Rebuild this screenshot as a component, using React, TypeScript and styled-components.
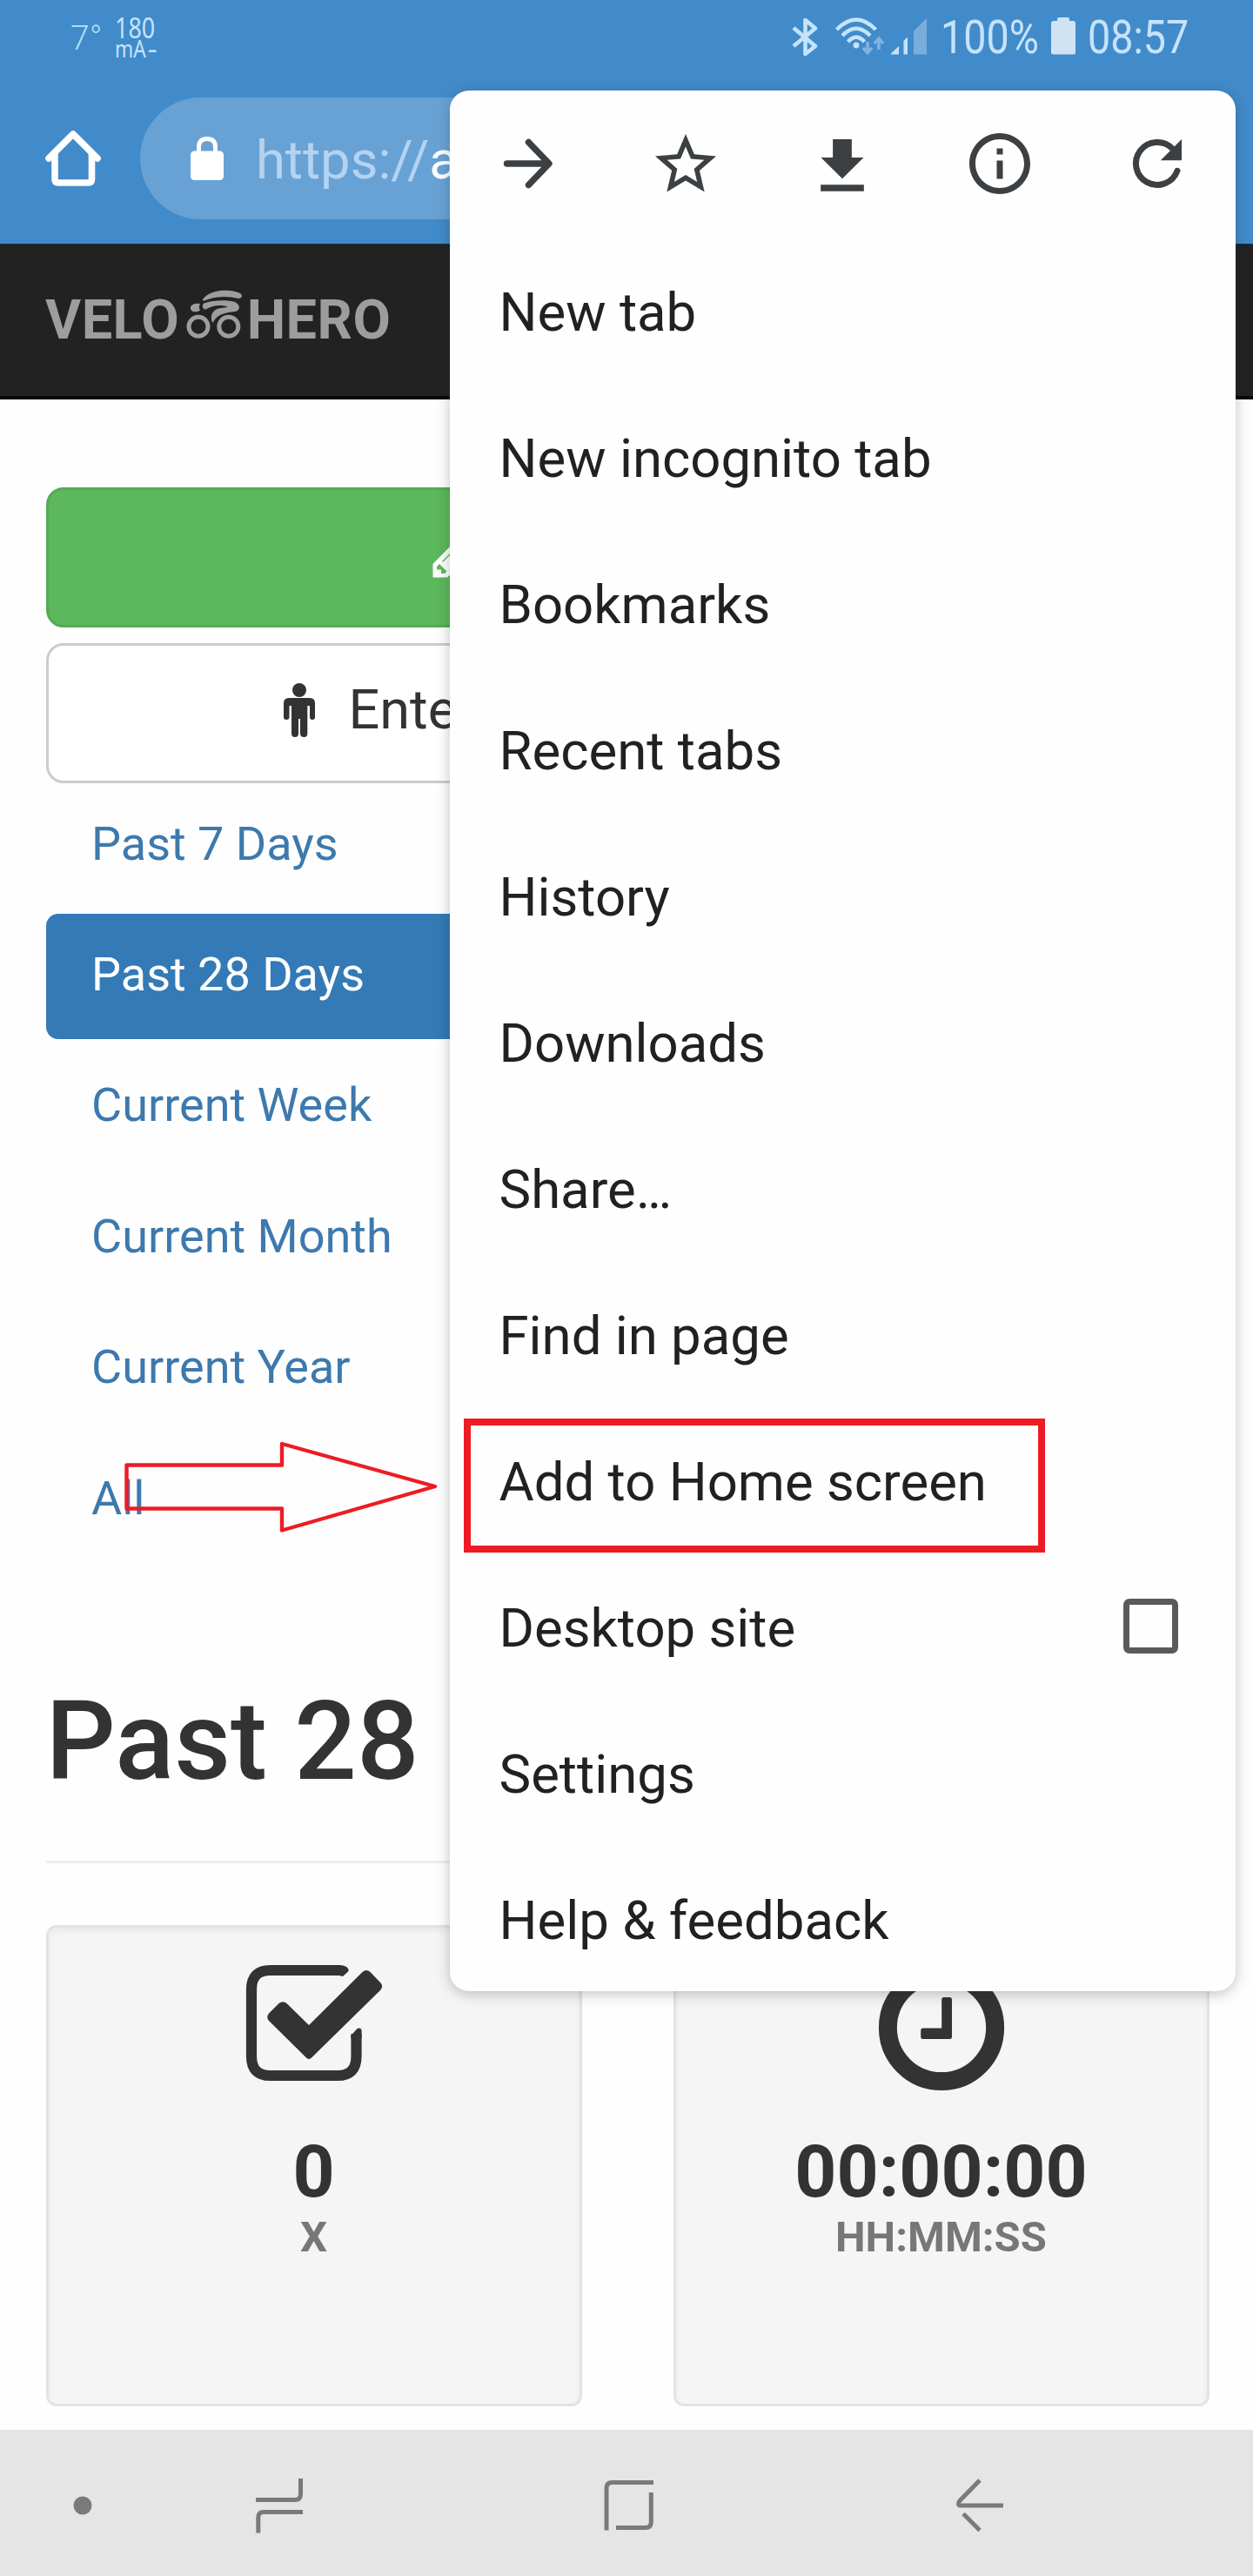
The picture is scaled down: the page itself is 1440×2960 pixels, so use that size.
import React from "react";
import styled, { createGlobalStyle } from "styled-components";

const GlobalStyle = createGlobalStyle`
  * { box-sizing: border-box; }
  body { margin: 0; background: #fefefe; font-family: Roboto, "Liberation Sans", sans-serif; }
  svg { display: block; flex: none; }
`;

const Phone = styled.div`
  position: relative;
  display: flex;
  flex-direction: column;
  width: 1440px;
  height: 2960px;
  overflow: hidden;
  background: #fefefe;
`;

/* ---------- status bar ---------- */
const StatusBar = styled.header`
  display: flex;
  justify-content: space-between;
  height: 84px;
  padding: 0 75px 0 81px;
  background: #428bca;
  color: #c5e3fb;
`;
const StatusGroup = styled.div`
  display: flex;
  align-items: flex-start;
`;
const Temperature = styled.span`
  width: 51px;
  margin-top: 20px;
  font-size: 39px;
  line-height: 48px;
  font-weight: 300;
  color: #b5daf8;
`;
const Current = styled.div`
  display: flex;
  flex-direction: column;
  margin-top: 17px;
  font-family: "Noto Sans", sans-serif;
  transform: scaleX(0.84);
  transform-origin: left;
`;
const CurrentLine = styled.span<{ $size: number }>`
  font-size: ${(p) => p.$size}px;
  line-height: ${(p) => (p.$size > 30 ? 29 : 20)}px;
`;
const Dash = styled.span`
  display: inline-block;
  margin-left: 2px;
  font-weight: 500;
  transform: scaleX(1.5);
  transform-origin: left;
`;
const StatusText = styled.span<{ $width: number }>`
  width: ${(p) => p.$width}px;
  margin-top: 13px;
  font-size: 53px;
  line-height: 60px;
  white-space: nowrap;
  transform: scaleX(0.88);
  transform-origin: left;
`;

/* ---------- browser toolbar ---------- */
const Toolbar = styled.div`
  display: flex;
  align-items: center;
  height: 197px;
  padding: 0 0 1px 48px;
  background: #428bca;
  border-bottom: 1px solid #12304a;
`;
const AddressBar = styled.div`
  display: flex;
  align-items: center;
  width: 1100px;
  height: 140px;
  margin-left: 41px;
  padding-left: 54px;
  border-radius: 70px;
  background: #68a2d5;
`;
const Url = styled.span`
  margin-left: 33px;
  padding-top: 4px;
  font-size: 61.5px;
  color: #b4d3f1;
`;
const Host = styled.span`
  color: #fff;
`;

/* ---------- site ---------- */
const SiteHeader = styled.div`
  display: flex;
  align-items: center;
  height: 178px;
  padding: 0 0 2px 52px;
  background: #222;
  border-bottom: 4px solid #080808;
`;
const Brand = styled.div`
  display: flex;
  align-items: center;
  font-size: 63px;
  font-weight: 700;
  letter-spacing: 0.5px;
  color: #9d9d9d;
  svg { margin: -10px 5px 0 6.5px; }
`;
const Page = styled.main`
  display: flex;
  flex-direction: column;
  flex: 1;
  padding: 101px 50.5px 0 52.5px;
`;
const Button = styled.div<{ $green?: boolean }>`
  display: flex;
  align-items: center;
  height: 161px;
  margin-bottom: 18px;
  padding-left: ${(p) => (p.$green ? 441 : 269)}px;
  border: 3.5px solid ${(p) => (p.$green ? "#57a957" : "#ccc")};
  border-radius: 20px;
  background: ${(p) => (p.$green ? "#5cb85c" : "#fff")};
  font-size: 63px;
  color: #333;
  svg { margin-top: ${(p) => (p.$green ? -3 : -7)}px; }
  &:nth-child(2) { margin-bottom: 0; }
`;
const ButtonLabel = styled.span`
  margin: -9px 0 0 38px;
`;
const Pills = styled.nav`
  display: flex;
  flex-direction: column;
  gap: 7px;
`;
const Pill = styled.a<{ $active?: boolean }>`
  display: flex;
  align-items: center;
  height: 143.4px;
  padding: 0 0 5.2px 52.5px;
  border-radius: 14px;
  font-size: 54px;
  color: ${(p) => (p.$active ? "#fff" : "#3d79ad")};
  background: ${(p) => (p.$active ? "#337ab7" : "transparent")};
`;
const Heading = styled.h1`
  margin: 132px 0 0;
  padding-bottom: 63px;
  border-bottom: 3.5px solid #eee;
  font-size: 126px;
  line-height: 148px;
  font-weight: 500;
  color: #333;
`;
const Cards = styled.div`
  display: grid;
  grid-template-columns: 616px 616px;
  gap: 105px;
  margin-top: 71px;
`;
const Card = styled.section`
  display: flex;
  flex-direction: column;
  align-items: center;
  height: 553px;
  border: 3.5px solid #e3e3e3;
  border-radius: 12px;
  background: #f5f5f5;
  box-shadow: inset 0 4px 6px rgba(0, 0, 0, 0.05);
`;
const CardIcon = styled.div`
  display: flex;
  justify-content: center;
  width: 170px;
  height: 190px;
  padding-top: 42px;
`;
const CardValue = styled.div`
  margin-top: 49px;
  font-size: 84px;
  line-height: 84px;
  font-weight: 700;
  color: #333;
`;
const CardUnit = styled.div`
  margin-top: 5px;
  font-size: 49px;
  line-height: 56px;
  font-weight: 700;
  color: #777;
`;

/* ---------- overflow menu ---------- */
const Menu = styled.aside`
  position: absolute;
  left: 517px;
  top: 104px;
  width: 903px;
  height: 2184px;
  border-radius: 22px;
  background: #fefefe;
  box-shadow: 0 3px 16px rgba(20, 40, 40, 0.28);
`;
const MenuIcons = styled.div`
  display: grid;
  grid-template-columns: repeat(5, 1fr);
  align-items: center;
  justify-items: center;
  height: 168px;
`;
const MenuItem = styled.div`
  display: flex;
  align-items: center;
  justify-content: space-between;
  height: 168px;
  padding: 5px 66px 0 56.5px;
  font-size: 61.7px;
  color: #212121;
`;
const Checkbox = styled.span`
  width: 63px;
  height: 63px;
  margin-top: -5px;
  border: 7px solid #5a5a5a;
  border-radius: 7px;
`;

/* ---------- annotations ---------- */
const Highlight = styled.div`
  position: absolute;
  left: 533px;
  top: 1630px;
  width: 668px;
  height: 154px;
  border: 8px solid #ed1c24;
`;
const Pointer = styled.svg`
  position: absolute;
  left: 140px;
  top: 1650px;
`;

/* ---------- navigation bar ---------- */
const NavBar = styled.footer`
  display: flex;
  align-items: center;
  height: 168px;
  padding: 6px 0 0 84px;
  background: #e5e5e5;
`;
const NavSlot = styled.div<{ $gap?: number }>`
  margin-left: ${(p) => p.$gap ?? 0}px;
`;

const menuItems = [
  "New tab", "New incognito tab", "Bookmarks", "Recent tabs", "History", "Downloads",
  "Share…", "Find in page", "Add to Home screen", "Desktop site", "Settings", "Help & feedback",
];
const ranges = ["Past 7 Days", "Past 28 Days", "Current Week", "Current Month", "Current Year", "All"];
const ink = "#3c4043";

const StatusIcons = () => (
  <svg width="174" height="84" viewBox="906 0 174 84">
    <path d="M911 32 L936 53 L924.500 62 V23 L936 32.500 L911 53" fill="none" stroke="#c5e3fb" strokeWidth="4.600" strokeLinejoin="round" />
    <g fill="none" stroke="#c5e3fb" strokeWidth="4.400">
      <path d="M960.500 34 Q983 11 1005.500 34" />
      <path d="M967 41 Q983 24.500 999 41" />
      <path d="M973.500 48 Q983 37.500 992.500 48" />
    </g>
    <circle cx="983" cy="52" r="3.400" fill="#c5e3fb" />
    <g fill="none" stroke="#7fb2e0" strokeWidth="3.600">
      <path d="M996 48 V60 M991 55 L996 60.500 L1001 55" />
      <path d="M1009 57 V45 M1004 50 L1009 44.500 L1014 50" />
    </g>
    <path d="M1022 62.500 L1032 53 V62.500 Z M1037.500 62.500 V47 L1042 42.500 V62.500 Z" fill="#c5e3fb" />
    <path d="M1049 62.500 V36 L1064 21 V62.500 Z" fill="#7badda" />
  </svg>
);

const BikeLogo = () => (
  <svg width="66" height="60" viewBox="212 332 66 60" fill="#9d9d9d">
    <g fill="none" stroke="#9d9d9d" strokeWidth="5">
      <circle cx="227" cy="375.300" r="11" />
      <circle cx="261.800" cy="375.300" r="11" />
    </g>
    <path d="M232 344 C240 332.500 264 331.500 274 336.500 C278.500 338.500 277.500 343 273 343 C259 339.500 245 340.500 234 345.500 C232.500 345.500 231.500 345 232 344Z" />
    <path d="M233.500 348.500 C244 344.500 261 344.500 269 347 C276 350.500 275 357 269 358 C258 359.500 249 360 243.500 371 C240.500 366 241.500 360 246 356.500 C250 353.500 256 354 261 352.800 C252 349.500 243 351 235 355.800 C231 355 231 350 233.500 348.500Z" />
    <path d="M218 353 C219.500 349 224 348.500 229 349 C227.500 352 227.500 354 229 356.500 C225 359.500 217 359 218 353 Z" />
  </svg>
);

const CheckIcon = () => (
  <svg width="158" height="136" viewBox="281.500 2257 158 136" fill="#333">
    <path d="M391 2264 H310 Q288.500 2264 288.500 2286 V2363 Q288.500 2385 310 2385 H387.500 Q409 2385 409 2363 V2337" fill="none" stroke="#333" strokeWidth="12.200" />
    <path d="M389 2257.900 C396 2258 401 2261 400 2265 L393.500 2271 L389 2270Z" />
    <path d="M402.900 2339 L410 2331 Q415.100 2329 415.100 2334 V2342 H402.900Z" />
    <path d="M354.500 2327 L329 2302 Q324.500 2298.500 320 2302 L308.500 2313.500 Q305 2318 308.500 2322 L351 2364 Q354.500 2368 358 2364 L436.500 2287 Q440.500 2282.500 437 2278.500 L425 2266 Q420.500 2262 416 2266Z" />
  </svg>
);

const ClockIcon = () => (
  <svg width="146" height="146" viewBox="1008.300 2256.500 146 146">
    <circle cx="1081.300" cy="2329.500" r="61.600" fill="none" stroke="#333" strokeWidth="21" />
    <path d="M1084 2294.500 H1091 Q1093.300 2294.500 1093.300 2297 V2340 Q1093.300 2342.500 1091 2342.500 H1060 Q1057.500 2342.500 1057.500 2340 V2333 Q1057.500 2330 1060 2330 H1081.500 V2297 Q1081.500 2294.500 1084 2294.500Z" fill="#333" />
  </svg>
);

export default function App() {
  return (
    <Phone>
      <GlobalStyle />
      <StatusBar>
        <StatusGroup>
          <Temperature>7°</Temperature>
          <Current>
            <CurrentLine $size={32}>180</CurrentLine>
            <CurrentLine $size={27}>mA<Dash>-</Dash></CurrentLine>
          </Current>
        </StatusGroup>
        <StatusGroup>
          <StatusIcons />
          <StatusText $width={126}>100%</StatusText>
          <svg width="43" height="84" viewBox="1206 0 43 84">
            <path d="M1210 24 H1214 V22 Q1214 20 1216 20 H1226 Q1228 20 1228 22 V24 H1232 Q1235 24 1235 27 V60 Q1235 62.500 1232.500 62.500 H1209.500 Q1207 62.500 1207 60 V27 Q1207 24 1210 24Z" fill="#cfe3f3" />
          </svg>
          <StatusText $width={115}>08:57</StatusText>
        </StatusGroup>
      </StatusBar>
      <Toolbar>
        <svg width="72" height="72" viewBox="48 146 72 72" fill="none" stroke="#fff" strokeWidth="7.600" strokeLinecap="round" strokeLinejoin="round">
          <path d="M56 182 L84 154 L112 182" />
          <path d="M63 177 V206 Q63 210 67 210 H101.500 Q105.500 210 105.500 206 V177" />
        </svg>
        <AddressBar>
          <svg width="46" height="54" viewBox="215 154 46 54">
            <path d="M228.500 176 V168 Q228.500 158.500 238 158.500 Q247.500 158.500 247.500 168 V176" fill="none" stroke="#fff" strokeWidth="5" />
            <rect x="219" y="172.500" width="38" height="33.500" rx="4.500" fill="#fff" />
          </svg>
          <Url>https://<Host>a</Host></Url>
        </AddressBar>
      </Toolbar>
      <SiteHeader>
        <Brand>VELO<BikeLogo />HERO</Brand>
      </SiteHeader>
      <Page>
        <Button $green>
          <svg width="56" height="56" viewBox="497 610 56 56">
            <path d="M497.500 662.500 V647 L535 609 L552 626 L514 662.500 Z" fill="#fff" />
            <path d="M502 650 L505 647 L513.500 655.500 L511 658 H507 V653.500 H502Z" fill="#5cb85c" />
            <path d="M508.500 644.500 L534 619" stroke="#5cb85c" strokeWidth="1.500" />
          </svg>
        </Button>
        <Button>
          <svg width="38" height="64" viewBox="325 783 38 64" fill="#333">
            <circle cx="344" cy="792" r="8" />
            <path d="M332 801 H356 Q362 801 362 807 V823 Q362 826 359 826 Q356 826 356 823 V810 H353.300 V842 Q353.300 846 349.500 846 Q345 846 345 842 V825 H343 V842 Q343 846 339 846 Q335 846 335 842 V810 H332.500 V823 Q332.500 826 329 826 Q326 826 326 823 V807 Q326 801 332 801Z" />
          </svg>
          <ButtonLabel>Enter</ButtonLabel>
        </Button>
        <Pills>
          {ranges.map((r) => (
            <Pill key={r} $active={r === "Past 28 Days"}>{r}</Pill>
          ))}
        </Pills>
        <Heading>Past 28</Heading>
        <Cards>
          <Card>
            <CardIcon><CheckIcon /></CardIcon>
            <CardValue>0</CardValue>
            <CardUnit>X</CardUnit>
          </Card>
          <Card>
            <CardIcon><ClockIcon /></CardIcon>
            <CardValue>00:00:00</CardValue>
            <CardUnit>HH:MM:SS</CardUnit>
          </Card>
        </Cards>
      </Page>
      <NavBar>
        <NavSlot>
          <svg width="22" height="22"><circle cx="11" cy="11" r="10.500" fill="#7a7a7a" /></svg>
        </NavSlot>
        <NavSlot $gap={186}>
          <svg width="60" height="66" viewBox="292 2846 60 66" fill="none" stroke="#7a7a7a" strokeWidth="5">
            <path d="M345.500 2848 V2866 Q345.500 2872.500 339 2872.500 H294" />
            <path d="M296.800 2910.500 V2893 Q296.800 2886.500 303 2886.500 H348" />
          </svg>
        </NavSlot>
        <NavSlot $gap={340}>
          <svg width="62" height="64" viewBox="692 2848 62 64" fill="none" stroke="#7a7a7a" strokeWidth="5">
            <path d="M697 2908.500 V2860 Q697 2853.500 703.500 2853.500 H751" />
            <path d="M748.300 2865 V2899 Q748.300 2905.500 742 2905.500 H708" />
          </svg>
        </NavSlot>
        <NavSlot $gap={342}>
          <svg width="62" height="66" viewBox="1096 2847 62 66" fill="none" stroke="#7a7a7a" strokeWidth="5">
            <path d="M1126 2851 L1102.500 2875 Q1100 2880 1104 2880 H1153" strokeLinejoin="round" />
            <path d="M1126 2908.500 L1107 2889.500" />
          </svg>
        </NavSlot>
      </NavBar>

      <Menu>
        <MenuIcons>
          <svg width="84" height="84" viewBox="0 0 84 84" fill="none" stroke={ink} strokeWidth="7.400" strokeLinecap="round" strokeLinejoin="round">
            <path d="M17.500 42 H65.500 M42.500 17.500 L66 42 L42.500 66.500" />
          </svg>
          <svg width="84" height="84" viewBox="0 -0.300 24 24" fill={ink}>
            <path d="M22 9.240l-7.190-.62L12 2 9.190 8.630 2 9.240l5.460 4.730L5.820 21 12 17.270 18.180 21l-1.630-7.030L22 9.240zM12 15.400l-3.760 2.270 1-4.280-3.320-2.880 4.380-.38L12 6.100l1.710 4.040 4.380.38-3.320 2.880 1 4.280L12 15.400z" />
          </svg>
          <svg width="84" height="84" viewBox="0 0 24 24" fill={ink}>
            <path d="M15.100 10 H19 L12 16.900 L5 10 H8.900 V4 H15.100Z" />
            <path d="M4.900 18.900h14.200v2.200H4.900z" />
          </svg>
          <svg width="84" height="84" viewBox="0 0 24 24" fill={ink}>
            <path d="M11 7h2v2h-2zm0 4h2v6h-2zm1-9C6.480 2 2 6.480 2 12s4.480 10 10 10 10-4.480 10-10S17.520 2 12 2zm0 18c-4.410 0-8-3.590-8-8s3.590-8 8-8 8 3.590 8 8-3.590 8-8 8z" />
          </svg>
          <svg width="84" height="84" viewBox="0 0 24 24" fill={ink}>
            <path d="M20 4 V10.900 H13.100Z" />
            <path d="M17 7.100 A7 7 0 1 0 18.550 14.400" fill="none" stroke={ink} strokeWidth="2" strokeLinecap="round" />
          </svg>
        </MenuIcons>
        {menuItems.map((m) => (
          <MenuItem key={m}>{m}{m === "Desktop site" && <Checkbox />}</MenuItem>
        ))}
      </Menu>
      <Highlight />
      <Pointer width="370" height="116" viewBox="140 1650 370 116" fill="none" stroke="#ed1c24" strokeWidth="4.400">
        <path d="M145.500 1683.500 H324 V1659 L500 1708 L324 1758.500 V1733.500 H145.500 Z" strokeLinejoin="round" />
      </Pointer>
    </Phone>
  );
}
